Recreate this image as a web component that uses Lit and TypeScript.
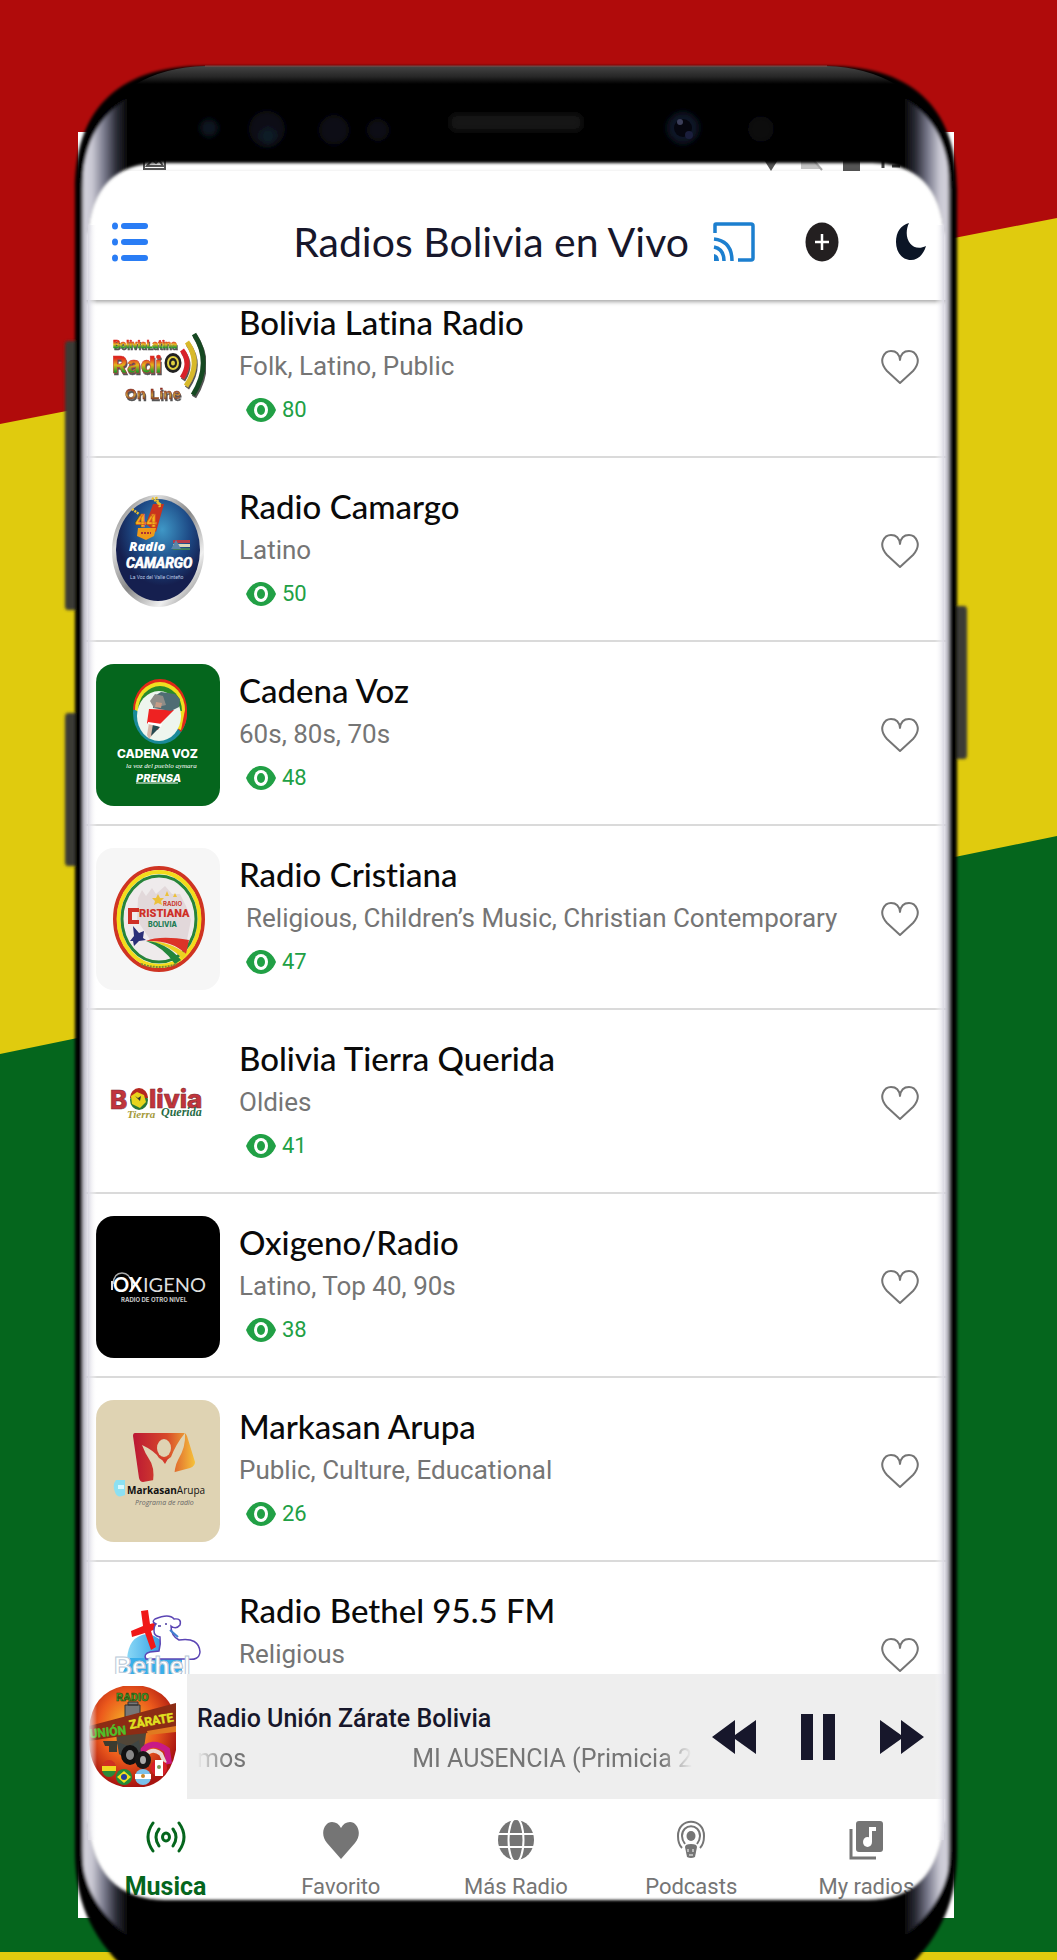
import { LitElement, html, svg, css, TemplateResult } from "lit";
import { customElement, property } from "lit/decorators.js";

interface Station {
  name: string;
  genres: string;
  views: number;
  art: string;
  shifted?: boolean;
}

const STATIONS: Station[] = [
  { name: "Bolivia Latina Radio", genres: "Folk, Latino, Public", views: 80, art: "latina" },
  { name: "Radio Camargo", genres: "Latino", views: 50, art: "camargo" },
  { name: "Cadena Voz", genres: "60s, 80s, 70s", views: 48, art: "cadena" },
  { name: "Radio Cristiana", genres: "Religious, Children’s Music, Christian Contemporary", views: 47, art: "cristiana", shifted: true },
  { name: "Bolivia Tierra Querida", genres: "Oldies", views: 41, art: "tierra" },
  { name: "Oxigeno/Radio", genres: "Latino, Top 40, 90s", views: 38, art: "oxigeno" },
  { name: "Markasan Arupa", genres: "Public, Culture, Educational", views: 26, art: "markasan" },
  { name: "Radio Bethel 95.5 FM", genres: "Religious", views: 22, art: "bethel" },
];

const ART: Record<string, TemplateResult> = {
  latina: svg`
    <defs>
      <linearGradient id="g1" x1="0" y1="0" x2="0" y2="1">
        <stop offset="0.25" stop-color="#e0261c"/><stop offset="0.5" stop-color="#e3b51c"/><stop offset="0.75" stop-color="#1f9a2a"/>
      </linearGradient>
      <linearGradient id="g2" x1="0" y1="0" x2="0" y2="1">
        <stop offset="0.2" stop-color="#9c1f1c"/><stop offset="0.6" stop-color="#c9a03a"/><stop offset="0.9" stop-color="#7a2a20"/>
      </linearGradient>
      <filter id="sh"><feDropShadow dx="1" dy="2" stdDeviation="0.6" flood-color="#555"/></filter>
    </defs>
    <text x="17" y="52" font-family="Roboto, sans-serif" font-weight="700" font-size="11" fill="url(#g1)" stroke="url(#g1)" stroke-width="0.6" filter="url(#sh)">BoliviaLatina</text>
    <text x="16" y="77" font-family="Inter, sans-serif" font-weight="800" font-size="23" fill="url(#g1)" stroke="#c33" stroke-width="0.5" filter="url(#sh)">Radi</text>
    <ellipse cx="77" cy="67" rx="8.500" ry="10" fill="#222"/><ellipse cx="77" cy="67" rx="6" ry="7" fill="#e0d040"/><ellipse cx="77" cy="67" rx="4" ry="5" fill="#222"/><ellipse cx="77" cy="67" rx="2" ry="2.500" fill="#e0d040"/>
    <g fill="none" filter="url(#sh)">
      <path d="M86 54q10 13 0 28" stroke="#d8202a" stroke-width="5"/>
      <path d="M91 46q15 21 -1 44" stroke="#d8b92c" stroke-width="5"/>
      <path d="M98 38q19 29 -1 61" stroke="#174a20" stroke-width="5"/>
    </g>
    <text x="29" y="103" font-family="Liberation Sans, sans-serif" font-weight="700" font-size="15" fill="url(#g2)" stroke="#7a3a2a" stroke-width="0.4" filter="url(#sh)">On Line</text>`,
  camargo: svg`
    <defs>
      <linearGradient id="g3" x1="0" y1="0" x2="1" y2="1">
        <stop offset="0" stop-color="#555"/><stop offset="0.25" stop-color="#ddd"/><stop offset="0.5" stop-color="#888"/><stop offset="0.75" stop-color="#f0f0f0"/><stop offset="1" stop-color="#666"/>
      </linearGradient>
      <radialGradient id="g4" cx="0.55" cy="0.3" r="0.55">
        <stop offset="0" stop-color="#3f97c6"/><stop offset="0.6" stop-color="#1d4a86"/><stop offset="1" stop-color="#151f4f"/>
      </radialGradient>
    </defs>
    <ellipse cx="62" cy="71" rx="46" ry="56" fill="url(#g3)"/>
    <ellipse cx="62" cy="70" rx="42" ry="51" fill="url(#g4)"/>
    <path d="M50 44L57 24 68 24 60 52z" fill="#c8331e"/>
    <path d="M36 29l7 5M56 18l9 7M60 17l4 10" stroke="#e8c030" stroke-width="2.500" stroke-dasharray="2 1"/>
    <path d="M42 48h18l-2 8-8 4-9-4z" fill="#ef9a18"/><path d="M45 53h10" stroke="#a33" stroke-width="2" stroke-dasharray="2 1"/>
    <text x="39" y="47" font-family="Roboto, sans-serif" font-weight="900" font-size="19" fill="#f4b41c" stroke="#d4541c" stroke-width="0.6">44</text>
    <text x="33" y="71" font-family="Open Sans, sans-serif" font-weight="800" font-style="italic" font-size="13" fill="#fff">Radio</text>
    <path d="M77 60h17v3H77z" fill="#b43b4a"/><path d="M77 64h17v3H77z" fill="#dcd6b8"/><path d="M77 68h17v2H77z" fill="#3d7d5c"/><path d="M75 69l5-9 5 9z" fill="#5b86a8"/>
    <text x="30" y="88" font-family="Roboto, sans-serif" font-weight="700" font-style="italic" font-size="14" fill="#fff" stroke="#fff" stroke-width="0.6">CAMARGO</text>
    <text x="34" y="99" font-family="Roboto, sans-serif" font-size="5" fill="#b9c9e4">La Voz del Valle Cinteño</text>`,
  cadena: svg`
    <rect width="124" height="142" fill="#05661d"/>
    <ellipse cx="64" cy="49" rx="27" ry="31" fill="#1a8a9a"/>
    <path d="M37 46a27 31 0 0 1 54 0q1 12 -6 22l-4-4V40z" fill="#e02818"/>
    <path d="M39 46a25 28 0 0 1 50 0l-4 20z" fill="#f0e020"/>
    <path d="M42 47a22 25 0 0 1 44 0z" fill="#2b8a2a"/>
    <ellipse cx="63" cy="52" rx="22" ry="25" fill="#eef5ee"/>
    <path d="M53 45l25 1-14 14-2 6-11-7z" fill="#ee2222"/>
    <path d="M57 33l8-5 14 2 5 5-1 8-8 4-18-3z" fill="#4f6d74"/>
    <path d="M54 37l5-7 8 2 3 9-12 3z" fill="#8f8d88"/>
    <path d="M60 38l6 1-1 5-6-1z" fill="#c79c86"/>
    <path d="M53 59l12 2-12 14-2-4z" fill="#d8b8a8"/><path d="M57 60l7 3-9 9z" fill="#264b52"/><path d="M52 58l14 2-1 3-13-3z" fill="#fff"/>
    <text x="21" y="94" font-family="Inter, sans-serif" font-weight="800" font-size="12" fill="#fff">CADENA VOZ</text>
    <text x="30" y="104" font-family="Liberation Serif, serif" font-style="italic" font-size="7" fill="#fff">la voz del pueblo aymara</text>
    <text x="40" y="118" font-family="Inter, sans-serif" font-weight="800" font-style="italic" font-size="11" fill="#fff">PRENSA</text>
    <path d="M40 119h42" stroke="#fff" stroke-width="1"/>`,
  cristiana: svg`
    <rect width="124" height="142" fill="#f6f6f6"/>
    <ellipse cx="63" cy="71" rx="44" ry="51" fill="#fff" stroke="#cf3423" stroke-width="4"/>
    <ellipse cx="63" cy="71" rx="40.500" ry="47" fill="none" stroke="#f4dc1c" stroke-width="4"/>
    <ellipse cx="63" cy="71" rx="37" ry="43" fill="#efebec" stroke="#27843a" stroke-width="3"/>
    <path d="M42 50l4-8 4 6 6-8 4 6 9-8 7 8 8 0 6 12 5 14-4 20-34 4-16-24z" fill="#e2d8da"/>
    <path d="M62 46l2 4 4 0-3 3 1 4-4-2-4 2 1-4-3-3 4 0zM71 43l2 5-4 0zM79 45l2 4-4 0z" fill="#ecc13a"/>
    <text x="67" y="58" font-family="Inter, sans-serif" font-weight="700" font-size="6" fill="#c9362a">RADIO</text>
    <path d="M43 60H32v16h11v-4h-7v-8h7z" fill="#cf2f26"/>
    <text x="43" y="69" font-family="Roboto, sans-serif" font-weight="900" font-size="11" fill="#cf2f26">RISTIANA</text>
    <text x="52" y="79" font-family="Inter, sans-serif" font-weight="800" font-size="7" fill="#1e7d55">BOLIVIA</text>
    <path d="M50 93q14-6 43-1l-3 14q-14-14-40-13z" fill="#dc3328"/>
    <path d="M50 93q24 0 40 13l-3 5q-16-16-37-18z" fill="#ecd122"/>
    <path d="M50 93q20 1 35 19l-6 4q-12-17-29-23z" fill="#23863c"/>
    <path d="M37 78l6 7 5-2-1 7 3 2-7 1-5 5-1-5-3 0 4-5z" fill="#2a2f78"/>
    <path d="M45 116q18 6 36 0" fill="none" stroke="#7a8a34" stroke-width="2" stroke-dasharray="2 1"/>`,
  tierra: svg`
    <text x="14" y="77" font-family="Inter, sans-serif" font-weight="800" font-size="26" fill="#c2343c" stroke="#7d2a30" stroke-width="0.6">B</text>
    <ellipse cx="43" cy="68" rx="9" ry="10" fill="#2a7838"/><path d="M34 66a9 10 0 0 1 18 0z" fill="#b52820"/><path d="M35 64l6-4 7 3 2 7-6 6-8-4z" fill="#e8d41c"/><path d="M39 64l3 2 3-2-1 5z" fill="#333"/>
    <text x="53" y="76" font-family="Inter, sans-serif" font-weight="800" font-size="26" fill="#c2343c" stroke="#7d2a30" stroke-width="0.6">livia</text>
    <text x="31" y="86" font-family="Liberation Serif, serif" font-style="italic" font-weight="700" font-size="11" fill="#a59a3a">Tierra</text>
    <text x="65" y="84" font-family="Liberation Serif, serif" font-style="italic" font-weight="700" font-size="12" fill="#276b45">Querida</text>`,
  oxigeno: svg`
    <rect width="124" height="142" fill="#000"/>
    <path d="M17 68q1-11 9-11t10 11" fill="none" stroke="#aaa" stroke-width="1.500"/>
    <path d="M16 65v9M36 65v9" stroke="#ddd" stroke-width="2"/>
    <text x="17" y="76" font-family="Lato, sans-serif" font-weight="700" font-size="20" fill="#fff">OX</text>
    <text x="47" y="76" font-family="Lato, sans-serif" font-weight="400" font-size="20" fill="#ddd">IGENO</text>
    <text x="25" y="86" font-family="Inter, sans-serif" font-weight="700" font-size="6" fill="#ccc">RADIO DE OTRO NIVEL</text>`,
  markasan: svg`
    <defs><linearGradient id="g5"><stop offset="0" stop-color="#bb1734"/><stop offset="0.55" stop-color="#d84a2a"/><stop offset="1" stop-color="#f6c23a"/></linearGradient></defs>
    <rect width="124" height="142" fill="#dfd3b3"/>
    <path d="M39 33H88q2 0 3 3l8 26q0 4-5 6L79 72l-20 4-1 4-11 2q-3 0-4-4L37 36q0-3 2-3z" fill="url(#g5)"/>
    <path d="M46 45q13 6 17 13 6 5 12-1Q80 44 89 33 90 47 82 60q-4 7-4 22H57q2-15-4-23-4-6-7-14z" fill="#dfd3b3"/>
    <path d="M64 57q5 4 9 0l-4 7z" fill="#d43a2c"/>
    <ellipse cx="68" cy="48" rx="7" ry="9" fill="#dfd3b3"/>
    <path d="M20 80h9v15q-8 4-10-3-3-7 1-12z" fill="#8ce0f2"/><path d="M22 85h6v4h-6z" fill="#d8f8ff"/>
    <text x="31" y="94" font-family="Open Sans, sans-serif" font-weight="700" font-size="10" fill="#111">Markasan<tspan font-weight="400">Arupa</tspan></text>
    <text x="39" y="105" font-family="Open Sans, sans-serif" font-style="italic" font-size="7" fill="#666">Programa de radio</text>`,
  bethel: svg`
    <defs><linearGradient id="g6" x1="0" y1="0" x2="1" y2="0"><stop offset="0" stop-color="#8ad8f6"/><stop offset="0.6" stop-color="#49aee8"/><stop offset="1" stop-color="#2e86d8"/></linearGradient></defs>
    <path d="M31 76q1-24 20-26 18 2 22 26z" fill="url(#g6)"/>
    <path d="M34 74h52v20H24z" fill="#39aeea"/>
    <path d="M45 27l7-1 2 14 12-3 0 5-11 5 5 16-5 3-6-17-13 4-1-6 12-5z" fill="#f01818"/>
    <path d="M60 40q-5-2-1-5 14-6 19 0 8-1 6 6-4 5-9 1 0 10 8 14 20-3 21 12-1 9-13 7H50q-3-5 4-7l9-1q2-7 1-14-6-1-6-6 0-5 2-7z" fill="#fff" stroke="#5b45b4" stroke-width="1.500"/>
    <path d="M62 42h3M69 40h2" stroke="#4a3aa0" stroke-width="1.500"/><path d="M74 46l8 7" stroke="#3f7fd0" stroke-width="2"/>
    <text x="18" y="91" font-family="Liberation Sans, sans-serif" font-weight="700" font-size="25" fill="#fff" stroke="#b8c8d8" stroke-width="1">Bethel</text>`,
  union: svg`
    <defs><radialGradient id="g7" cx="0.45" cy="0.4" r="0.6"><stop offset="0" stop-color="#f6c02a"/><stop offset="0.55" stop-color="#ec5a1c"/><stop offset="1" stop-color="#a81410"/></radialGradient></defs>
    <path d="M34 0h20q28 6 33 34V64q-6 32-32 37H34Q3 94 0 58V42Q3 7 34 0z" fill="url(#g7)"/>
    <text x="27" y="15" font-family="Roboto, sans-serif" font-weight="900" font-size="11" fill="#3f9a2a" stroke="#274a10" stroke-width="0.5">RADIO</text>
    <path d="M36 19h15v12H36zM39 16h10v3H39z" fill="#777" stroke="#333"/>
    <path d="M26 33h28l4 8-4 28H34l-6-12z" fill="#514637"/>
    <path d="M0 40L87 17V44L40 49 0 55z" fill="#8c2c14"/>
    <path d="M58 45l29-5v6l-28 3z" fill="#e07a20"/>
    <text x="1" y="52" font-family="Roboto, sans-serif" font-weight="700" font-size="12" fill="#4fc02a" stroke="#4fc02a" stroke-width="0.5" transform="rotate(-6 1 52)">UNIÓN</text>
    <text x="41" y="43" font-family="Roboto, sans-serif" font-weight="700" font-size="12" fill="#e0e020" stroke="#e0e020" stroke-width="0.5" transform="rotate(-10 41 43)">ZÁRATE</text>
    <path d="M52 67q10-15 26-3l2 14" fill="none" stroke="#c81a86" stroke-width="6"/><path d="M54 72q8-12 18-4l4 9" fill="none" stroke="#ead8d0" stroke-width="4"/>
    <path d="M14 55h14v5H16z M20 60h8v6h-8z" fill="#3c3c30"/>
    <path d="M28 56l12 4 10-6 2 12-14 8-8-6z" fill="#3f4644"/>
    <ellipse cx="41" cy="69" rx="9" ry="10" fill="#111"/><ellipse cx="41" cy="69" rx="4" ry="5" fill="#888"/>
    <ellipse cx="54" cy="74" rx="8" ry="9" fill="#181818"/><ellipse cx="54" cy="74" rx="3" ry="4" fill="#aaa"/>
    <ellipse cx="20" cy="83" rx="7" ry="8" fill="#2a8a3a"/><path d="M13 82a7 8 0 0 1 14 0z" fill="#d03020"/><path d="M13 80h14v5H13z" fill="#f0d820"/>
    <ellipse cx="35" cy="91" rx="8" ry="8" fill="#238a3a"/><path d="M28 91l7-6 7 6-7 6z" fill="#f0e020"/><circle cx="35" cy="91" r="3" fill="#22409a"/>
    <ellipse cx="54" cy="91" rx="8" ry="8" fill="#7ac0ea"/><path d="M46 88h16v5H46z" fill="#fff"/><circle cx="54" cy="90" r="2" fill="#c8862a"/>
    <ellipse cx="70" cy="82" rx="8" ry="8" fill="#d8202a"/><path d="M66 74h8v16h-8z" fill="#fff"/><circle cx="70" cy="81" r="2" fill="#7a9a5a"/>`,
};

const NAV_ICONS: Record<string, TemplateResult> = {
  musica: svg`<g fill="none" stroke="#05661d" stroke-width="3" stroke-linecap="round">
      <ellipse cx="20" cy="17" rx="3.500" ry="4"/><path d="M13 9q-6 8 0 17M27 9q6 8 0 17M7 3q-10 14 0 28M33 3q10 14 0 28"/></g>`,
  favorito: svg`<path d="M20 39L6 23C-2 13 4 2 11 2q6 0 9 6 3-6 9-6c7 0 13 11 5 21z" fill="#757575"/>`,
  radio: svg`<ellipse cx="20" cy="20" rx="18" ry="20" fill="#757575"/>
      <g fill="none" stroke="#fff" stroke-width="2"><path d="M1 14H39M1 27H39"/><ellipse cx="20" cy="20" rx="7.500" ry="22"/></g>`,
  podcasts: svg`<g fill="none" stroke="#757575" stroke-width="2"><path d="M11 28Q7 24 7 16C7-3 33-3 33 16q0 8-4 12"/><path d="M14 24q-3-4-3-8c0-13 18-13 18 0q0 4-3 8"/></g>
      <ellipse cx="20" cy="16" rx="4.500" ry="5" fill="#757575"/><path d="M14 27q0-3 6-3t6 3l-2 10q-4 2-8 0z" fill="#757575"/><path d="M17 29v3M22 29v3M18 35h4" stroke="#fff" stroke-width="1"/>`,
  mine: svg`<rect x="10" y="1" width="27" height="31" rx="3" fill="#757575"/><path d="M5 9v29h25" fill="none" stroke="#757575" stroke-width="3"/>
      <path d="M23 7h7v4h-4v11h-3z" fill="#fff"/><ellipse cx="21.500" cy="22" rx="4.500" ry="5" fill="#fff"/>`,
};

const NAV = [
  { id: "musica", label: "Musica" },
  { id: "favorito", label: "Favorito" },
  { id: "radio", label: "Más Radio" },
  { id: "podcasts", label: "Podcasts" },
  { id: "mine", label: "My radios" },
];

@customElement("station-row")
export class StationRow extends LitElement {
  @property({ attribute: false }) station!: Station;

  static styles = css`
    :host { display: block; }
    .row {
      box-sizing: border-box;
      display: flex;
      align-items: center;
      height: 184px;
      padding: 3px 30px 0 18px;
      gap: 19px;
      border-bottom: 2px solid #dadada;
    }
    .art { flex: none; display: block; width: 124px; height: 142px; border-radius: 18px; }
    .info { flex: 1; min-width: 0; display: flex; flex-direction: column; }
    .name {
      margin: 0;
      font: 500 33px/43px Lato, "Open Sans", sans-serif;
      font-variant-ligatures: none;
      color: #0a0a0a;
      white-space: nowrap;
    }
    .genres { margin: 0; font: 400 26px/44px Roboto, sans-serif; color: #757575; white-space: nowrap; }
    .shifted { padding-left: 7px; }
    .views { display: flex; align-items: center; gap: 6px; padding-left: 7px; font: 400 22px/44px Roboto, sans-serif; color: #21a045; }
    .fav { flex: none; border: 0; background: none; padding: 4px; margin: 0; display: block; }
    .fav svg, .views svg { display: block; }
  `;

  render() {
    const s = this.station;
    return html`
      <article class="row">
        <svg class="art" viewBox="0 0 124 142" role="img" aria-label=${s.name}>${ART[s.art]}</svg>
        <div class="info">
          <h2 class="name">${s.name}</h2>
          <p class="genres ${s.shifted ? "shifted" : ""}">${s.genres}</p>
          <div class="views">
            <svg width="30" height="24" viewBox="0 0 30 24" aria-hidden="true">
              <path d="M0 12C6-4 24-4 30 12 24 28 6 28 0 12z" fill="#21a045"/>
              <ellipse cx="15" cy="12" rx="7" ry="8" fill="#fff"/><ellipse cx="15" cy="12" rx="4" ry="5" fill="#21a045"/>
            </svg>
            <span>${s.views}</span>
          </div>
        </div>
        <button class="fav" aria-label="Favorito ${s.name}">
          <svg width="40" height="40" viewBox="0 0 40 40" aria-hidden="true">
            <path d="M20 36L7 24C-3 13 5 4 11 4q8 0 9 9 1-9 9-9c6 0 14 9 4 20z" fill="none" stroke="#757575" stroke-width="2" stroke-linejoin="round"/>
          </svg>
        </button>
      </article>`;
  }
}

@customElement("app-root")
export class AppRoot extends LitElement {
  static styles = css`
    :host { display: block; }
    .stage {
      position: relative;
      box-sizing: border-box;
      height: 100vh;
      min-height: 900px;
      padding: 132px 103px 42px 78px;
      overflow: hidden;
      background: #b00b0b;
      display: flex;
    }
    .flag, .frame { position: absolute; top: 0; left: 0; width: 100%; height: 100%; display: block; }
    .frame { pointer-events: none; z-index: 2; }
    .screen {
      position: relative;
      z-index: 1;
      flex: 1;
      min-width: 0;
      display: flex;
      flex-direction: column;
      background: #fff;
      overflow: hidden;
    }
    .status { box-sizing: border-box; flex: none; display: flex; align-items: flex-end; height: 39px; padding: 0 52px 0 65px; gap: 20px; }
    .status .space { flex: 1; }
    .status svg { display: block; }
    .bar {
      position: relative;
      z-index: 1;
      box-sizing: border-box;
      flex: none;
      display: flex;
      align-items: center;
      justify-content: space-between;
      gap: 50px;
      height: 129px;
      padding: 12px 27px 0 34px;
      background: #fff;
      box-shadow: 0 2px 4px rgba(0, 0, 0, 0.35);
    }
    .title { margin: 0; font: 400 41px/48px Lato, "Open Sans", sans-serif; color: #17172b; white-space: nowrap; }
    .tools { display: flex; align-items: center; gap: 56px; }
    .heading { display: flex; align-items: center; gap: 24px; margin-left: auto; }
    .icon { border: 0; background: none; padding: 0; margin: 0; display: block; }
    .icon svg { display: block; }
    .list { flex: 1; min-height: 0; overflow: hidden; }
    .rows { list-style: none; margin: -26px 0 0; padding: 0; }
    .player { flex: none; display: flex; height: 125px; background: #fff; }
    .cover { flex: none; display: flex; align-items: center; width: 109px; padding-left: 11px; box-sizing: border-box; }
    .cover svg { display: block; }
    .now { flex: 1; min-width: 0; display: flex; align-items: center; background: #eee; padding: 0 30px 0 10px; }
    .track { flex: 1; min-width: 0; padding-top: 4px; }
    .song { margin: 0; font: 500 25px/40px Roboto, sans-serif; color: #17172b; white-space: nowrap; }
    .ticker {
      margin: 0;
      display: flex;
      justify-content: space-between;
      font: 400 25px/40px Roboto, sans-serif;
      color: #757575;
      white-space: nowrap;
      overflow: hidden;
      -webkit-mask-image: linear-gradient(90deg, transparent, #000 30px, #000 calc(100% - 30px), transparent);
      mask-image: linear-gradient(90deg, transparent, #000 30px, #000 calc(100% - 30px), transparent);
    }
    .controls { flex: none; display: flex; align-items: center; gap: 45px; padding-left: 20px; }
    .tabs { flex: none; display: flex; height: 119px; background: #fff; }
    .tab {
      flex: 1;
      display: flex;
      flex-direction: column;
      align-items: center;
      padding-top: 21px;
      gap: 10px;
      font: 400 22px/30px Roboto, sans-serif;
      color: #757575;
      text-decoration: none;
    }
    .active { font-weight: 700; font-size: 25px; color: #05661d; }
    .tab svg { display: block; }
  `;

  private flag() {
    return html`
      <svg class="flag" viewBox="0 0 1057 1960" preserveAspectRatio="none" aria-hidden="true">
        <path d="M0 424L1057 218V1960H0z" fill="#e0cb0e"/>
        <path d="M0 1054L1057 836V1952H0z" fill="#05661d"/>
      </svg>`;
  }

  private frame() {
    const hole = "M88 235Q93 163 160 163H872Q939 163 944 235V1820Q938 1900 868 1900H165Q94 1900 88 1820z";
    return html`
      <svg class="frame" viewBox="0 0 1057 1960" preserveAspectRatio="none" aria-hidden="true">
        <defs>
          <linearGradient id="metal" gradientUnits="userSpaceOnUse" x1="80" y1="0" x2="952" y2="0">
            <stop offset="0" stop-color="#222"/><stop offset="0.005" stop-color="#d3d2dc"/><stop offset="0.014" stop-color="#c8c7d2"/>
            <stop offset="0.028" stop-color="#77788a"/><stop offset="0.042" stop-color="#2a2b35"/><stop offset="0.056" stop-color="#000"/>
            <stop offset="0.944" stop-color="#000"/><stop offset="0.958" stop-color="#2a2b35"/><stop offset="0.972" stop-color="#77788a"/>
            <stop offset="0.986" stop-color="#c8c7d2"/><stop offset="0.994" stop-color="#d3d2dc"/><stop offset="1" stop-color="#222"/>
          </linearGradient>
          <linearGradient id="fadeL"><stop offset="0" stop-color="#d9d8e2"/><stop offset="1" stop-color="#fff" stop-opacity="0"/></linearGradient>
          <linearGradient id="fadeR"><stop offset="0" stop-color="#fff" stop-opacity="0"/><stop offset="1" stop-color="#d9d8e2"/></linearGradient>
          <linearGradient id="lip" x1="0" y1="0" x2="0" y2="1"><stop offset="0" stop-color="#454545"/><stop offset="0.6" stop-color="#262626"/><stop offset="1" stop-color="#000"/></linearGradient>
          <filter id="soft" x="-5%" y="-5%" width="110%" height="110%"><feGaussianBlur stdDeviation="1.5"/></filter>
          <filter id="glow" x="-50%" y="-50%" width="200%" height="200%"><feGaussianBlur stdDeviation="3"/></filter>
        </defs>
        <g filter="url(#soft)">
          <path d="M76 341H68Q65 341 65 346V606Q65 610 68 610H76zM76 713H68Q65 713 65 718V862Q65 866 68 866H76z" fill="#3a3a36"/>
          <path d="M957 606H964Q967 606 967 610V755Q967 759 964 759H957z" fill="#3a3a36"/>
          <path fill-rule="evenodd" fill="#000" d="M75 190C75 115 112 66 205 66H827C920 66 957 115 957 190V1850C957 1890 948 1930 906 1970H126C84 1930 75 1890 75 1850zM${hole.slice(1)}"/>
          <path fill-rule="evenodd" fill="url(#metal)" d="M82 190C83 140 100 110 145 88H887C932 110 949 140 950 190V1850C950 1890 930 1920 886 1950H146C102 1920 82 1890 82 1850zM${hole.slice(1)}"/>
        </g>
        <path d="M136 84Q165 67 205 66H827Q865 67 895 84z" fill="url(#lip)"/>
        <path d="M205 66H827" stroke="#8a4a48" stroke-width="1"/>
        <path d="M88 225h9V1840h-9z" fill="url(#fadeL)"/>
        <path d="M935 225h9V1840h-9z" fill="url(#fadeR)"/>
        <g filter="url(#glow)">
          <circle cx="209" cy="128" r="9" fill="#0d1624"/><circle cx="267" cy="129" r="18" fill="#0a0d18"/><circle cx="268" cy="136" r="8" fill="#0e1a28"/>
          <circle cx="334" cy="130" r="15" fill="#0b0b12"/><circle cx="378" cy="130" r="11" fill="#0b0b12"/>
          <rect x="450" y="114" width="132" height="17" rx="6" fill="#181818"/>
          <circle cx="683" cy="128" r="16" fill="#101326"/><circle cx="761" cy="129" r="13" fill="#09090f"/>
        </g>
        <circle cx="683" cy="128" r="9" fill="#05060f"/><circle cx="680" cy="122" r="3" fill="#3c3f5a"/><circle cx="689" cy="135" r="4" fill="#1a1e3c"/>
      </svg>`;
  }

  render() {
    return html`
      <div class="stage">
        ${this.flag()}
        <main class="screen">
          <div class="status" aria-hidden="true">
            <svg width="23" height="20" viewBox="0 0 23 20"><path d="M1 0v18h21V0M4 15l5-6 4 3 3-3 4 6z" fill="none" stroke="#555" stroke-width="2"/></svg>
            <span class="space"></span>
            <svg width="20" height="16" viewBox="0 0 20 16"><path d="M0 0h20L10 16z" fill="#555"/></svg>
            <svg width="22" height="20" viewBox="0 0 22 20"><path d="M0 18V4L8 4 20 18z" fill="#c4c4c4"/><path d="M8 4l13 15" stroke="#aaa" stroke-width="2"/></svg>
            <svg width="17" height="20" viewBox="0 0 17 20"><path d="M0 0h17v20H0z" fill="#555"/></svg>
            <svg width="22" height="20" viewBox="0 0 22 20"><path d="M3 0v17M12 15h8" stroke="#444" stroke-width="3"/></svg>
          </div>
          <header class="bar">
            <button class="icon" aria-label="Menú">
              <svg width="36" height="40" viewBox="0 0 36 40"><g fill="#2a7df5"><ellipse cx="3" cy="4" rx="3" ry="3.500"/><ellipse cx="3" cy="20" rx="3" ry="3.500"/><ellipse cx="3" cy="36" rx="3" ry="3.500"/><rect x="9" y="1" width="27" height="6" rx="3"/><rect x="9" y="17" width="27" height="6" rx="3"/><rect x="9" y="33" width="27" height="6" rx="3"/></g></svg>
            </button>
            <div class="heading">
              <h1 class="title">Radios Bolivia en Vivo</h1>
              <button class="icon" aria-label="Transmitir">
                <svg width="42" height="40" viewBox="0 0 42 40"><g fill="none" stroke="#1c7fcf" stroke-width="3.500"><path d="M2 11V3Q2 2 3 2H38Q40 2 40 4V36Q40 38 38 38H25"/><path d="M1 17Q19 19 19 39M1 25Q11 27 11 39"/></g><path d="M1 32Q6 33 6 39H1z" fill="#1c7fcf"/></svg>
              </button>
            </div>
            <div class="tools">
              <button class="icon" aria-label="Agregar">
                <svg width="34" height="40" viewBox="0 0 34 40"><ellipse cx="17" cy="20" rx="16.500" ry="19.500" fill="#231f20"/><path d="M17 12v16M10 20h14" stroke="#fff" stroke-width="2.500"/></svg>
              </button>
              <button class="icon" aria-label="Modo oscuro">
                <svg width="32" height="40" viewBox="0 0 32 40"><path d="M14 1C7 16 17 31 31 24 28 34 22 38 16 38 7 38 1 30 1 20 1 10 6 3 14 1z" fill="#0b1526"/></svg>
              </button>
            </div>
          </header>
          <section class="list" aria-label="Emisoras">
            <ul class="rows">
              ${STATIONS.map((s) => html`<li><station-row .station=${s}></station-row></li>`)}
            </ul>
          </section>
          <section class="player" aria-label="Reproductor">
            <div class="cover"><svg width="87" height="101" viewBox="0 0 87 101" role="img" aria-label="Radio Unión Zárate Bolivia">${ART.union}</svg></div>
            <div class="now">
              <div class="track">
                <p class="song">Radio Unión Zárate Bolivia</p>
                <p class="ticker"><span>mos</span><span>MI AUSENCIA (Primicia 2</span></p>
              </div>
              <div class="controls">
                <button class="icon" aria-label="Anterior"><svg width="44" height="46" viewBox="0 0 44 46"><path d="M0 23L23 6V21L44 6V40L23 25V40z" fill="#17172b"/></svg></button>
                <button class="icon" aria-label="Pausa"><svg width="34" height="46" viewBox="0 0 34 46"><path d="M0 0h12v46H0zM22 0h12v46H22z" fill="#17172b"/></svg></button>
                <button class="icon" aria-label="Siguiente"><svg width="44" height="46" viewBox="0 0 44 46"><path d="M44 23L21 6V21L0 6V40L21 25V40z" fill="#17172b"/></svg></button>
              </div>
            </div>
          </section>
          <nav class="tabs" aria-label="Secciones">
            ${NAV.map((n, i) => html`
              <a class="tab ${i === 0 ? "active" : ""}" href="#${n.id}">
                <svg width="40" height="42" viewBox="0 0 40 42" aria-hidden="true">${NAV_ICONS[n.id]}</svg>
                <span>${n.label}</span>
              </a>`)}
          </nav>
        </main>
        ${this.frame()}
      </div>`;
  }
}
